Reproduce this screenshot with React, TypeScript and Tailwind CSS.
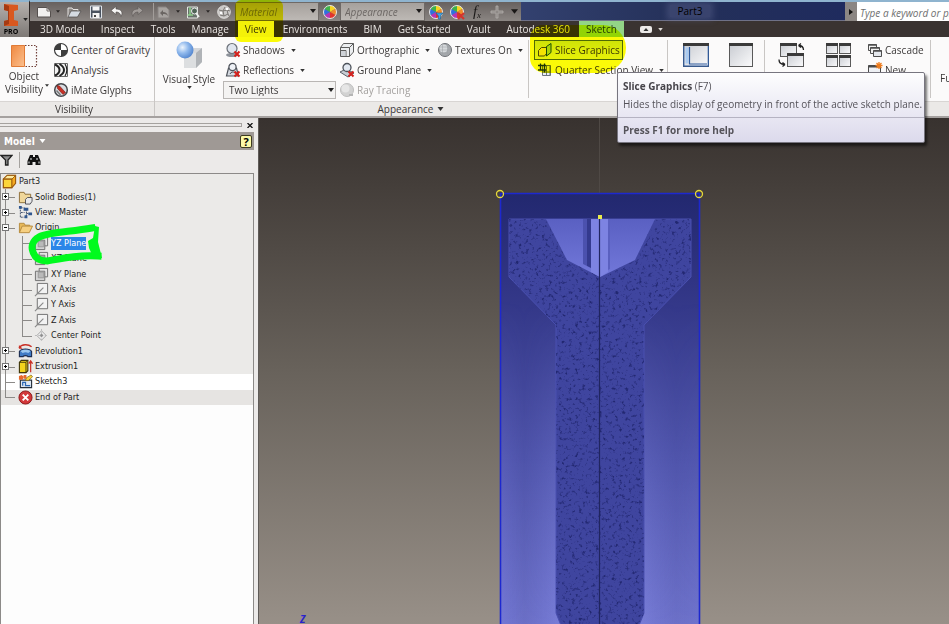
import type { ReactNode } from "react";

type IconProps = { children: ReactNode; className?: string; box?: string };

function Icon({ children, className = "h-4 w-4", box = "0 0 16 16" }: IconProps) {
  return (
    <svg viewBox={box} className={`shrink-0 ${className}`} fill="none" aria-hidden="true">
      {children}
    </svg>
  );
}

function Caret({ className = "h-[3px] w-[5px] text-[#333]" }: { className?: string }) {
  return (
    <svg viewBox="0 0 6 4" className={`shrink-0 ${className}`} aria-hidden="true">
      <path d="M0 0h6L3 4z" fill="currentColor" />
    </svg>
  );
}

function Divider() {
  return <div className="my-[3px] w-px shrink-0 bg-[#c9c6c4]" />;
}

/* ---------- quick access icons ---------- */

const newIcon = (
  <Icon>
    <path d="M1.500 3.500h9.500l3.500 3.500v6h-13z" fill="#f1f0ef" stroke="#55504e" />
    <path d="M11 3.500V7h3.500" stroke="#77716e" />
  </Icon>
);

const openIcon = (
  <Icon>
    <path d="M2 13V4h4l1 1.500h5V7" fill="#8d8986" stroke="#e7e5e3" />
    <path d="M2 13l3-6h10l-3.500 6z" fill="#d5dbe2" stroke="#4c4846" strokeWidth=".7" />
  </Icon>
);

const saveIcon = (
  <Icon>
    <path d="M2.500 2h11v12h-11z" fill="#4a5360" stroke="#dfe4ea" />
    <path d="M4.500 2.500h7v4h-7zM4.500 9h7v5h-7z" fill="#f5f5f5" />
    <path d="M6 11h2v2H6z" fill="#444" />
  </Icon>
);

const undoIcon = (
  <Icon>
    <path d="M7 2.500L2 6.500l5 4V8c3 0 4.500 1.500 5 4.500C14.500 8 12 5 7 5z" fill="#f6f5f4" stroke="#4b4644" strokeWidth=".6" />
  </Icon>
);

const redoIcon = (
  <Icon>
    <path d="M9 2.500l5 4-5 4V8c-3 0-4.500 1.500-5 4.500C1.500 8 4 5 9 5z" fill="#a09b98" stroke="#5d5855" strokeWidth=".6" />
  </Icon>
);

const returnIcon = (
  <Icon>
    <path d="M2 3h8l3 3v8H2z" fill="#a7a3a0" stroke="#8a8583" />
    <path d="M4 9l3-3v2c3 0 4 1 5 4-2-2-3-2-5-2v2z" fill="#6a6562" />
  </Icon>
);

const updateIcon = (
  <Icon>
    <path d="M2.500 3h10v11h-10z" fill="#68716b" stroke="#e3e6e2" />
    <path d="M5 3v8M2.500 11H8" stroke="#8fd08c" strokeWidth="1.500" />
    <circle cx="9.500" cy="7" r="3" fill="#506457" stroke="#eef0ee" />
    <path d="M11 9l3 4" stroke="#eef0ee" strokeWidth="1.800" />
  </Icon>
);

const gearIcon = (
  <Icon>
    <circle cx="8" cy="8" r="6.300" fill="#c9c7c5" stroke="#dedcda" />
    <path d="M3 6l4 1 2-4M7 7l1 5 4-2-1-4-4 1M8 12l-4-1M11 6l3 1M12 10l1 2" stroke="#7a7673" />
    <circle cx="11" cy="5" r="1.200" fill="#fff" />
    <circle cx="5" cy="9" r="1.200" fill="#fff" />
  </Icon>
);

function Wheel({ badge }: { badge?: ReactNode }) {
  return (
    <Icon>
      <path d="M8 8V1.500A6.500 6.500 0 0 1 13.600 4.700z" fill="#f6d422" />
      <path d="M8 8l5.600-3.300a6.500 6.500 0 0 1 0 6.500z" fill="#f08b2a" />
      <path d="M8 8l5.600 3.200A6.500 6.500 0 0 1 8 14.500z" fill="#e2342b" />
      <path d="M8 8v6.500a6.500 6.500 0 0 1-5.600-3.300z" fill="#b534b5" />
      <path d="M8 8l-5.600 3.200a6.500 6.500 0 0 1 0-6.500z" fill="#2f6fe0" />
      <path d="M8 8L2.400 4.700A6.500 6.500 0 0 1 8 1.500z" fill="#3fb24a" />
      <circle cx="8" cy="8" r="6.500" stroke="#e9e7e5" />
      {badge}
    </Icon>
  );
}

/* ---------- ribbon icons ---------- */

const gravityIcon = (
  <Icon>
    <circle cx="8" cy="8" r="6.500" fill="#fff" stroke="#3d3d3d" strokeWidth="1.200" />
    <path d="M8 8V1.500A6.500 6.500 0 0 0 1.500 8zM8 8v6.500A6.500 6.500 0 0 0 14.500 8z" fill="#3d3d3d" />
  </Icon>
);

const analysisIcon = (
  <Icon>
    <path d="M1.500 1.500h13v13h-13z" fill="#f3f3f3" stroke="#6a6a6a" />
    <path d="M2 2.500c3.500 1.500 4.500 3.500 4.500 5.500S5.500 12 2 13.500M6.500 2c3.500 2 4.500 4 4.500 6s-1 4-4.500 6" stroke="#222" strokeWidth="2" />
    <path d="M12 2c2.500 4 2.500 8 0 12" stroke="#222" strokeWidth="1.200" />
  </Icon>
);

const imateIcon = (
  <Icon>
    <circle cx="8" cy="8" r="6.300" fill="#d9dde2" stroke="#44474b" strokeWidth="1.500" />
    <path d="M4 3.500l2.500.5L12.500 10.500l-2.500 2-5.500-6z" fill="#c62f25" stroke="#6e1813" strokeWidth=".6" />
    <path d="M3.500 8.500l4 4.500" stroke="#777" strokeWidth="1.500" />
  </Icon>
);

const redX = <path d="M9.500 9.500l5 5M14.500 9.500l-5 5" stroke="#d4201c" strokeWidth="2" />;

const shadowsIcon = (
  <Icon>
    <ellipse cx="7" cy="13" rx="6" ry="2" fill="#8d929a" />
    <circle cx="7" cy="6.500" r="5" fill="#dfe5ee" stroke="#6b7078" strokeWidth="1.200" />
    {redX}
  </Icon>
);

const reflectionsIcon = (
  <Icon>
    <path d="M1.500 14l2-8h8l2 8z" fill="#d6dbe2" stroke="#4d525a" strokeWidth="1.200" />
    <circle cx="7.500" cy="5" r="3.600" fill="#eef1f6" stroke="#4d525a" strokeWidth="1.200" />
    <path d="M5 12a3 3 0 0 1 5-1" stroke="#4d525a" />
    {redX}
  </Icon>
);

const orthoIcon = (
  <Icon>
    <path d="M1.500 5.500l3-4h10v8.500l-4 4.500h-9z" fill="#eceef0" stroke="#5d5d5d" />
    <path d="M1.500 5.500h9v9M10.500 5.500l4-4" stroke="#5d5d5d" />
    <path d="M1.500 8.500H7v6" stroke="#5d5d5d" />
    <path d="M2 9h4.500v5H2z" fill="#cfd3d8" />
  </Icon>
);

const groundIcon = (
  <Icon>
    <path d="M1 10l6-3 8 4-6 4z" fill="#c7ccd3" stroke="#5a5f66" />
    <circle cx="8" cy="5.500" r="4" fill="#e2e8f1" stroke="#4d525a" strokeWidth="1.300" />
    {redX}
  </Icon>
);

function Ball({ muted }: { muted?: boolean }) {
  return (
    <Icon>
      <circle cx="8" cy="8" r="6.500" fill={muted ? "#d2d2d2" : "#a6a9ad"} stroke={muted ? "#bdbdbd" : "#6d7075"} />
      <circle cx="6.500" cy="6.500" r="4" fill={muted ? "#e6e6e6" : "#d6d9dc"} />
      {muted ? (
        <path d="M10 13h4" stroke="#b5b5b5" strokeWidth="2" />
      ) : (
        <path d="M3 5h10M2 8h12M3 11h10M5.500 2.500v11M10.500 2.500v11" stroke="#9b9ea2" strokeWidth=".5" />
      )}
    </Icon>
  );
}

const sliceIcon = (
  <Icon>
    <path d="M1.500 8.500l3-3h5v6l-2 2.500h-6z" fill="#f4e34a" stroke="#4f4d12" />
    <path d="M9.500 4.500l4.500-3v9l-4.500 3.500z" fill="#a9d6f0" stroke="#1d4f7a" />
  </Icon>
);

const quarterIcon = (
  <Icon>
    <path d="M5.500 3.500h8v10h-8z" fill="#e9edf3" stroke="#6b7480" />
    <path d="M5.500 10h8M9.500 3.500v10M13 3.500v10" stroke="#6b7480" />
    <path d="M1 3.500h8M3.500 1.500v7M1 8h8M7.500 1.500v9" stroke="#1d35d8" strokeWidth="1.300" />
  </Icon>
);

const cascadeIcon = (
  <Icon>
    <path d="M1.500 2.500h8v6h-8z" fill="#f1f1f1" stroke="#4e4e4e" />
    <path d="M3.500 5.500h9v6h-9z" fill="#f1f1f1" stroke="#4e4e4e" />
    <path d="M6.500 8.500h8v6h-8z" fill="#e4e7ec" stroke="#4e4e4e" />
    <path d="M1.500 3h8M3.500 6h9M6.500 9h8" stroke="#4e4e4e" strokeWidth="1.600" />
  </Icon>
);

const newWindowIcon = (
  <Icon>
    <path d="M1.500 3.500h12v11h-12z" fill="#eef0f4" stroke="#4b4b4b" />
    <path d="M1.500 4.500h12" stroke="#4b4b4b" strokeWidth="2" />
    <path d="M12 0v7M8.500 3.500h7M9.500 1l5 5M14.500 1l-5 5" stroke="#ee7b1c" strokeWidth="1.300" />
  </Icon>
);

function WindowShape({ x, y, w, h }: { x: number; y: number; w: number; h: number }) {
  return (
    <g>
      <rect x={x + 0.5} y={y + 0.5} width={w - 1} height={h - 1} fill="url(#pane)" stroke="#5a5a5a" />
      <rect x={x} y={y} width={w} height="3" fill="#3a3a3a" />
    </g>
  );
}

const paneGradient = (
  <defs>
    <linearGradient id="pane" x1="0" y1="0" x2="1" y2="1">
      <stop offset="0" stopColor="#c8cbd1" />
      <stop offset="1" stopColor="#fbfbfc" />
    </linearGradient>
  </defs>
);

const tabs = [
  "3D Model",
  "Inspect",
  "Tools",
  "Manage",
  "View",
  "Environments",
  "BIM",
  "Get Started",
  "Vault",
  "Autodesk 360",
  "Sketch",
];

const tabStyle: Record<string, string> = {
  View: "bg-[#f4f1ee] text-[#3b3634]",
  Sketch: "bg-[#93d487] text-[#22381f]",
};

function QatButton({ label, className, children }: { label: string; className: string; children: ReactNode }) {
  return (
    <button aria-label={label} className={`flex h-full shrink-0 items-center justify-center ${className}`}>
      {children}
    </button>
  );
}

function QatSelect({ label, className }: { label: string; className: string }) {
  return (
    <div className={`relative h-full shrink-0 ${className}`}>
      <select
        aria-label={label}
        className="block h-full w-full appearance-none border border-[#6f6a67] bg-linear-to-b from-[#a5a09c] to-[#bdb9b5] pl-1 text-[10px] leading-4 text-[#6d6865] italic"
      >
        <option>{label}</option>
      </select>
      <Caret className="pointer-events-none absolute top-[7px] right-[3px] h-1 w-[6px] text-[#1c1a19]" />
    </div>
  );
}

function TitleBar() {
  return (
    <div className="flex h-[21px] items-stretch border-t-2 border-[#8fb4cf] bg-linear-to-b from-[#67615f] to-[#8b8683] pl-[5px]">
      <QatButton label="New" className="w-[18px]">{newIcon}</QatButton>
      <QatButton label="New options" className="w-[10px]"><Caret className="h-[3px] w-1 text-[#2b2827]" /></QatButton>
      <QatButton label="Open" className="w-[22px]">{openIcon}</QatButton>
      <QatButton label="Save" className="w-[22px]">{saveIcon}</QatButton>
      <QatButton label="Undo" className="w-5">{undoIcon}</QatButton>
      <QatButton label="Redo" className="w-5">{redoIcon}</QatButton>
      <div className="my-px mr-px ml-[6px] w-px shrink-0 bg-[#a29d9a]" />
      <QatButton label="Return" className="w-[18px]">{returnIcon}</QatButton>
      <QatButton label="Return options" className="w-[10px]"><Caret className="h-[3px] w-1 text-[#2b2827]" /></QatButton>
      <QatButton label="Update" className="w-5">{updateIcon}</QatButton>
      <QatButton label="Update options" className="w-[10px]"><Caret className="h-[3px] w-1 text-[#2b2827]" /></QatButton>
      <QatButton label="Materials" className="w-[22px]">{gearIcon}</QatButton>
      <QatSelect label="Material" className="w-[84px]" />
      <QatButton label="Appearances" className="w-[21px]"><Wheel /></QatButton>
      <QatSelect label="Appearance" className="w-[85px]" />
      <QatButton label="Adjust" className="w-[21px]">
        <Wheel badge={<path d="M8 9h7l-2.500 3v3h-2v-3z" fill="#3fa5e6" stroke="#1d5f91" strokeWidth=".6" />} />
      </QatButton>
      <QatButton label="Clear" className="w-[21px]">
        <Wheel badge={<path d="M9 9l6 6M15 9l-6 6" stroke="#d3342c" strokeWidth="2.200" />} />
      </QatButton>
      <QatButton label="Parameters" className="w-5">
        <span className="font-['Liberation_Serif',serif] text-[15px] leading-none text-[#1b1918] italic">
          f<sub className="text-[9px]">x</sub>
        </span>
      </QatButton>
      <QatButton label="Add" className="w-5">
        <Icon>
          <path d="M7 2h2v5h5v2H9v5H7V9H2V7h5z" fill="#8e8986" stroke="#b3aeab" strokeWidth=".8" />
        </Icon>
      </QatButton>
      <QatButton label="Customize" className="w-[14px]"><Caret className="h-[5px] w-[7px] text-[#191716]" /></QatButton>
      <div className="flex min-w-0 flex-1 items-center justify-center border-b border-[#6f7187] bg-linear-to-r from-[#33416f] via-[#243059] to-[#1f2b5e] pl-[14px]">
        <span className="bg-[#5a628b]/40 px-2 text-[10px] leading-3 text-black shadow-[0_0_6px_3px_rgba(100,108,150,0.4)]">Part3</span>
      </div>
      <button aria-label="Collapse search" className="flex w-3 shrink-0 items-center justify-center bg-[#8b8683]">
        <svg viewBox="0 0 4 6" className="h-[6px] w-1"><path d="M0 0l4 3-4 3z" fill="#111" /></svg>
      </button>
      <input
        aria-label="Search"
        placeholder="Type a keyword or phrase"
        className="w-[92px] shrink-0 bg-white pt-1 pl-[3px] text-[10px] italic placeholder:text-[#6f6f6f]"
      />
    </div>
  );
}

function TabBar() {
  return (
    <nav className="flex h-4 items-stretch gap-[2px] bg-[#3a3331] pl-[3px] text-[10px] text-[#e8e4e1]">
      {tabs.map((tab) => (
        <button key={tab} className={`shrink-0 px-[7px] leading-4 ${tabStyle[tab] ?? ""}`}>
          {tab}
        </button>
      ))}
      <button aria-label="Minimize ribbon" className="ml-[14px] flex items-center gap-[6px]">
        <Icon className="h-[7px] w-3" box="0 0 12 7">
          <rect width="12" height="7" rx="2" fill="#eceae8" />
          <path d="M3.500 5h5L6 2z" fill="#333" />
        </Icon>
        <Caret className="h-[3px] w-[5px] text-[#dedad7]" />
      </button>
    </nav>
  );
}

type CommandProps = { icon: ReactNode; label: string; menu?: boolean; muted?: boolean; className?: string };

function Command({ icon, label, menu, muted, className = "" }: CommandProps) {
  return (
    <button
      className={`flex h-5 items-center gap-[2px] whitespace-nowrap ${muted ? "text-[#a3a09e]" : "text-[#3b3838]"} ${className}`}
    >
      {icon}
      {label}
      {menu && <Caret className="ml-1 h-[3px] w-[5px] text-[#333]" />}
    </button>
  );
}

function Tooltip() {
  return (
    <div
      role="tooltip"
      className="absolute top-[35px] left-[88px] z-20 w-[308px] rounded-xs border border-[#77757f] bg-linear-to-b from-[#fdfdfe] to-[#dcdaec] text-[10px] whitespace-nowrap text-[#55535a] shadow-[2px_3px_3px_rgba(0,0,0,0.55)]"
    >
      <div className="px-[5px] pt-1 pb-1 leading-[18px]">
        <p><b className="text-[#454349]">Slice Graphics</b> (F7)</p>
        <p>Hides the display of geometry in front of the active sketch plane.</p>
      </div>
      <p className="border-t border-[#b5b3c2] px-[5px] leading-6 font-bold">Press F1 for more help</p>
    </div>
  );
}

function Ribbon() {
  return (
    <div className="flex h-[81px] border-b-2 border-[#a5a19f] bg-[#fbfafa] text-[10px] leading-3 text-[#3b3838]">
      <section className="flex w-[155px] shrink-0 flex-col border-r border-[#c9c6c4]">
        <div className="flex flex-1 pt-[3px]">
          <button className="relative flex w-12 flex-col items-center pt-1 leading-[13px]">
            <Icon className="mb-[2px] h-6 w-7" box="0 0 28 24">
              <defs>
                <linearGradient id="orange" x1="0" y1="0" x2="1" y2="1">
                  <stop offset="0" stopColor="#f0883f" />
                  <stop offset="1" stopColor="#fbc08f" />
                </linearGradient>
              </defs>
              <path d="M1.500 1.500h13v21h-13z" fill="url(#orange)" stroke="#e07b37" />
              <path d="M15 1.500h11.500v21H15" stroke="#71413a" strokeWidth="1.200" strokeDasharray="1.500 1.500" />
            </Icon>
            <span>Object</span>
            <span>Visibility</span>
            <Caret className="absolute top-11 -right-px h-[3px] w-1 text-[#333]" />
          </button>
          <div className="ml-[5px]">
            <Command icon={gravityIcon} label="Center of Gravity" />
            <Command icon={analysisIcon} label="Analysis" />
            <Command icon={imateIcon} label="iMate Glyphs" />
          </div>
        </div>
        <h2 className="h-[15px] border-t border-[#d8d5d3] bg-[#ebe9e7] pr-[6px] text-center leading-[14px]">Visibility</h2>
      </section>

      <section className="flex w-[512px] shrink-0 flex-col">
        <div className="flex flex-1">
          <button className="flex w-[68px] shrink-0 flex-col items-center pt-1">
            <Icon className="mb-1 h-7 w-7" box="0 0 28 28">
              <defs>
                <radialGradient id="bluebell" cx=".35" cy=".35" r=".7">
                  <stop offset="0" stopColor="#eef5fd" />
                  <stop offset=".5" stopColor="#8fb8ec" />
                  <stop offset="1" stopColor="#5285cf" />
                </radialGradient>
              </defs>
              <path d="M9 12l6-5h12v14l-6 6H9z" fill="#d5d7da" />
              <path d="M9 12h12v15H9z" fill="#dcdee0" />
              <path d="M21 12l6-5v14l-6 6z" fill="#b0b3b7" />
              <circle cx="10" cy="9" r="8.500" fill="url(#bluebell)" />
            </Icon>
            <span>Visual Style</span>
            <Caret className="mt-[1px] h-[3px] w-[5px] text-[#333]" />
          </button>
          <div className="w-[116px] shrink-0 pt-[3px]">
            <Command icon={shadowsIcon} label="Shadows" menu className="pl-[2px]" />
            <Command icon={reflectionsIcon} label="Reflections" menu className="pl-[2px]" />
            <div className="relative">
              <select
                aria-label="Lighting style"
                className="mt-px h-[18px] w-[113px] appearance-none border border-[#b9b6b4] bg-[#f4f3f2] pl-[5px] text-[10px]"
              >
                <option>Two Lights</option>
              </select>
              <Caret className="pointer-events-none absolute top-2 right-[5px] h-1 w-[6px] text-[#222]" />
            </div>
          </div>
          <div className="w-[98px] shrink-0 pt-[3px]">
            <Command icon={orthoIcon} label="Orthographic" menu />
            <Command icon={groundIcon} label="Ground Plane" menu />
            <Command icon={<Ball muted />} label="Ray Tracing" muted />
          </div>
          <div className="w-[91px] shrink-0 pt-[3px]">
            <Command icon={<Ball />} label="Textures On" menu />
          </div>
          <Divider />
          <div className="relative flex-1 pt-[3px] pl-[5px]">
            <div className="pointer-events-none absolute -top-3 left-px z-10 h-12 w-24 rounded-[20px_36px_40px_24px] bg-[#ffff08] mix-blend-multiply" />
            <Command
              icon={sliceIcon}
              label="Slice Graphics"
              className="w-[89px] border border-[#4f6a4a] bg-linear-to-b from-[#cfe3fa] to-[#e7f1fd] pl-[2px]"
            />
            <Command icon={quarterIcon} label="Quarter Section View" menu className="pl-[3px]" />
            <Tooltip />
          </div>
        </div>
        <h2 className="flex h-[15px] items-center justify-center gap-1 border-t border-[#d8d5d3] bg-[#ebe9e7]">
          Appearance <Caret className="h-1 w-[7px] text-[#333]" />
        </h2>
      </section>

      <section className="flex min-w-0 flex-1 flex-col">
        <div className="flex flex-1 overflow-hidden">
          <Divider />
          <div className="flex w-24 shrink-0 items-start gap-[18px] pt-[5px] pl-[14px]">
            <button aria-label="User Interface">
              <Icon className="h-[26px] w-7" box="0 0 28 26">
                {paneGradient}
                <WindowShape x={1} y={1} w={26} h={24} />
                <path d="M3.500 5.500h3v16h-3z" fill="#a9cbf2" />
                <path d="M1.800 4v20.200h24.500V4M7.500 5v17H25" stroke="#2e5a9d" strokeWidth="1.200" />
              </Icon>
            </button>
            <button aria-label="Clean Screen">
              <Icon className="h-[26px] w-[26px]" box="0 0 26 26">
                <WindowShape x={1} y={1} w={24} h={24} />
              </Icon>
            </button>
          </div>
          <Divider />
          <div className="flex w-[102px] shrink-0 items-start gap-5 pt-[5px] pl-[13px]">
            <button aria-label="Switch">
              <Icon className="h-[26px] w-7" box="0 0 28 26">
                <WindowShape x={2} y={1} w={17} h={14} />
                <WindowShape x={9} y={11} w={17} h={14} />
                <path d="M20.500 3.500c4 0 5 1.500 5 4.500M20.500 3.500l2.500-2M20.500 3.500l2.500 2M7 22.500c-5 0-6-2-6-5M7 22.500l-2.500 2M7 22.500l-2.500-2" stroke="#222" strokeWidth="1.300" />
              </Icon>
            </button>
            <button aria-label="Tile">
              <Icon className="h-[26px] w-[26px]" box="0 0 26 26">
                <WindowShape x={0} y={1} w={12} h={11} />
                <WindowShape x={13} y={1} w={12} h={11} />
                <WindowShape x={0} y={13} w={12} h={12} />
                <WindowShape x={13} y={13} w={12} h={12} />
              </Icon>
            </button>
          </div>
          <div className="w-[63px] shrink-0 pt-[3px] pr-px">
            <Command icon={cascadeIcon} label="Cascade" />
            <Command icon={newWindowIcon} label="New" />
          </div>
          <Divider />
          <button className="self-start pt-[35px] pl-[9px]">Full</button>
        </div>
        <div className="h-[15px] border-t border-[#d8d5d3] bg-[#ebe9e7]" />
      </section>
    </div>
  );
}

/* ---------- model browser ---------- */

const partIcon = (
  <Icon className="h-[15px] w-[15px]">
    <path d="M1.500 5.500l4-4h9v8.500l-4 4.500h-9z" fill="#f5a921" stroke="#9a5a0c" strokeWidth="1.200" />
    <path d="M1.500 5.500l4-4h9l-4 4z" fill="#fdeaa0" stroke="#9a5a0c" />
    <path d="M1.500 5.500h9v9h-9z" fill="#fcd53a" stroke="#9a5a0c" strokeWidth="1.200" />
  </Icon>
);

const bodiesIcon = (
  <Icon className="h-[15px] w-[15px]">
    <path d="M1.500 13.500v-11h5l1 2h6v9z" fill="#f0d79b" stroke="#8c6d36" />
    <path d="M8 10l2-2h5v4l-2 3H8z" fill="#e8e8ea" stroke="#4e4e55" />
  </Icon>
);

const viewIcon = (
  <Icon className="h-[15px] w-[15px]">
    <path d="M2.500 2v11M3 3h4M3 8h4M3 13h4M9 4v9M9 9h6" stroke="#3a4a66" strokeDasharray="2 1" />
    <path d="M1 1h3v3H1zM6 3h5v3H6zM7 11h3v3H7zM11 8h4v3h-4z" fill="#2f568f" />
  </Icon>
);

const folderIcon = (
  <Icon className="h-[15px] w-[15px]">
    <path d="M1.500 13.500v-10h5l1 2h5v3" fill="#e7b95a" stroke="#b58a3c" />
    <path d="M1.500 13.500l3-7h11l-3.500 7z" fill="#f6cf80" stroke="#b58a3c" />
  </Icon>
);

const planeIcon = (
  <Icon className="h-[15px] w-[15px]">
    <path d="M5.500 1.500h9v9h-9z" fill="#e6e6e6" stroke="#6e6e6e" />
    <path d="M1.500 4.500h10v10h-10z" fill="#d4d4d4" stroke="#6e6e6e" />
    <path d="M4.500 5.500h6v6h-6z" fill="#b9b9b9" stroke="#999" />
  </Icon>
);

const axisIcon = (
  <Icon className="h-[15px] w-[15px]">
    <path d="M3.500 1.500h11v11h-11z" fill="#f2f2f2" stroke="#6e6e6e" />
    <path d="M1 15l9-9" stroke="#888" strokeWidth="1.200" />
  </Icon>
);

const pointIcon = (
  <Icon className="h-[15px] w-[15px]">
    <path d="M8 3l5 5-5 5-5-5z" fill="#ececec" stroke="#a5a5a5" />
    <path d="M8 1v14M1 8h14" stroke="#b9b9b9" strokeDasharray="2 1.500" />
    <circle cx="8" cy="8" r="1.500" fill="#8f8f8f" />
  </Icon>
);

const revolutionIcon = (
  <Icon className="h-[15px] w-[15px]">
    <path d="M1 4C4 0 11 0 14.500 3" stroke="#c93026" strokeWidth="1.500" />
    <path d="M1 1v4h4z" fill="#c93026" />
    <path d="M1.500 8c2-3.500 11-3.500 13 0v5.500h-4c-.5-1.500-4.500-1.500-5 0h-4z" fill="#3f7ac4" stroke="#1d2e52" strokeWidth="1.200" />
    <path d="M2.500 7.500c3-2 8-2 11 0L11 9.500c-2-1-4-1-6 0z" fill="#9cc7ee" />
  </Icon>
);

const extrusionIcon = (
  <Icon className="h-[15px] w-[15px]">
    <path d="M1.500 3.500l2-2h7v11l-2 2h-7z" fill="#f2d41d" stroke="#3f370a" strokeWidth="1.200" />
    <path d="M8.500 3.500v11M1.500 3.500h7l2-2" stroke="#3f370a" />
    <path d="M13.500 14V3M11.500 5l2-3 2 3" stroke="#c93026" strokeWidth="1.300" />
  </Icon>
);

const sketchIcon = (
  <Icon className="h-[15px] w-[15px]">
    <path d="M2.500 6.500h12v8h-12z" fill="#dfe8f2" stroke="#27303c" strokeWidth="1.200" />
    <path d="M5 12.500V9h3v3.500h5" stroke="#2a67b5" strokeWidth="1.300" />
    <path d="M1 2l3-1 2 2-1 3H1zM6 1h3v4H6z" fill="#e8682b" />
    <path d="M8 7l1-3 5-3 1.500 2L11 7z" fill="#f6d33a" stroke="#7a5b0f" strokeWidth=".7" />
  </Icon>
);

const endIcon = (
  <Icon className="h-[15px] w-[15px]">
    <circle cx="8" cy="8" r="7" fill="#d2383a" stroke="#8b1719" />
    <path d="M5 5l6 6M11 5l-6 6" stroke="#fff" strokeWidth="2" />
  </Icon>
);

type TreeNode = { label: string; depth: 0 | 1 | 2; icon: ReactNode; toggle?: "+" | "-"; last?: boolean; row?: string };

const nodes: TreeNode[] = [
  { label: "Part3", depth: 0, icon: partIcon },
  { label: "Solid Bodies(1)", depth: 1, icon: bodiesIcon, toggle: "+" },
  { label: "View: Master", depth: 1, icon: viewIcon, toggle: "+" },
  { label: "Origin", depth: 1, icon: folderIcon, toggle: "-" },
  { label: "YZ Plane", depth: 2, icon: planeIcon },
  { label: "XZ Plane", depth: 2, icon: planeIcon },
  { label: "XY Plane", depth: 2, icon: planeIcon },
  { label: "X Axis", depth: 2, icon: axisIcon },
  { label: "Y Axis", depth: 2, icon: axisIcon },
  { label: "Z Axis", depth: 2, icon: axisIcon },
  { label: "Center Point", depth: 2, icon: pointIcon, last: true },
  { label: "Revolution1", depth: 1, icon: revolutionIcon, toggle: "+" },
  { label: "Extrusion1", depth: 1, icon: extrusionIcon, toggle: "+" },
  { label: "Sketch3", depth: 1, icon: sketchIcon, row: "bg-white" },
  { label: "End of Part", depth: 1, icon: endIcon, last: true, row: "bg-[#e6e4e2]" },
];

const indent = ["pl-px", "pl-[17px]", "pl-[33px]"];

function Branch({ node }: { node: TreeNode }) {
  if (node.depth === 0) return null;
  const inner = node.depth === 2;
  return (
    <>
      <span className={`absolute top-0 left-1 w-px bg-[#8c8a88] ${node.last && !inner ? "h-1/2" : "h-full"}`} />
      {inner && <span className={`absolute top-0 left-[21px] w-px bg-[#8c8a88] ${node.last ? "h-1/2" : "h-full"}`} />}
      <span className={`absolute top-1/2 h-px w-[10px] bg-[#8c8a88] ${inner ? "left-[21px]" : "left-1"}`} />
      {node.toggle && (
        <button aria-label={`Toggle ${node.label}`} className="absolute top-1 left-px h-[7px] w-[7px] border border-[#777] bg-white">
          <span className="absolute top-[2px] left-px h-px w-[3px] bg-black" />
          {node.toggle === "+" && <span className="absolute top-px left-[2px] h-[3px] w-px bg-black" />}
        </button>
      )}
    </>
  );
}

function ModelBrowser() {
  return (
    <aside className="flex w-[259px] shrink-0 flex-col border-r border-[#5f5b58] bg-[#eceae9] pr-1">
      <div className="flex h-[14px] items-center gap-[5px] pr-px">
        <div className="h-1 flex-1 border-y border-r border-[#a5a29f]" />
        <button aria-label="Close browser">
          <svg viewBox="0 0 6 6" className="h-[5px] w-[6px]"><path d="M0 0l6 6M6 0L0 6" stroke="#111" strokeWidth="1.500" /></svg>
        </button>
      </div>
      <div className="flex h-[18px] items-center justify-between bg-[#9f9995] pr-[2px] pl-1">
        <button className="flex items-center gap-1 font-['DejaVu_Sans_Condensed','Open_Sans',sans-serif] text-[10px] font-bold text-white">
          Model <Caret className="h-1 w-[7px] text-white" />
        </button>
        <button aria-label="Help" className="h-[13px] w-3 rounded-xs border border-[#3d3a20] bg-[#fcf9a8] text-[11px] leading-[11px] font-bold text-black">
          ?
        </button>
      </div>
      <div className="flex h-[23px] items-center gap-3 pb-[3px]">
        <button aria-label="Filter">
          <Icon className="h-3 w-[13px]" box="0 0 13 12">
            <path d="M1 1.500h11L8 6v5H5.500V6z" fill="#8d8d8d" stroke="#222" strokeWidth="1.300" />
          </Icon>
        </button>
        <div className="-ml-[6px] h-4 w-px bg-[#a5a29f]" />
        <button aria-label="Find" className="-ml-[5px]">
          <Icon className="h-3 w-[14px]" box="0 0 14 12">
            <path d="M3 1h3v2h2V1h3l2.500 6v4H8.500V8h-3v3H.5V7z" fill="#111" />
            <path d="M2 7.500v2M4 4v2M10 4v2M12 7.500v2" stroke="#eee" />
          </Icon>
        </button>
      </div>
      <div className="relative flex-1 border-t border-r border-l border-[#8c8a88] bg-[#fdfdfd]">
        <ul className="flex h-[231px] flex-col bg-[#ebeae8] font-['DejaVu_Sans_Condensed','Open_Sans',sans-serif] text-[9px] text-[#222]">
          {nodes.map((node) => (
            <li key={node.label} className={`relative flex flex-1 items-center gap-[2px] ${indent[node.depth]} ${node.row ?? ""}`}>
              <Branch node={node} />
              {node.icon}
              <span className={`leading-[13px] ${node.label === "YZ Plane" ? "bg-[#2a86e8] text-white" : ""}`}>{node.label}</span>
            </li>
          ))}
        </ul>
        {/* marker ring round the selected plane */}
        <svg viewBox="0 0 76 44" className="pointer-events-none absolute top-[49px] left-[27px] h-11 w-[76px]" fill="none" aria-hidden="true">
          <path d="M64 5C42 9 22 9 11 14 4 18 3 24 5 29 7 35 12 38 19 38 36 35 50 32 70 33" stroke="#00fa1e" strokeWidth="7" strokeLinecap="square" />
          <path d="M67 3l4 1-1 15 4 16-8 1-5-11-1-7 5-3z" fill="#00fa1e" />
        </svg>
      </div>
    </aside>
  );
}

const bolt = "M250 101H432V159L385 207V495L375 520H307L297 495V207L250 159Z";

function Viewport() {
  return (
    <main className="min-w-0 flex-1 overflow-hidden bg-linear-to-b from-[#38322f] via-[#68625b] to-[#989088]">
      <svg viewBox="0 0 690 506" preserveAspectRatio="xMidYMin slice" className="h-full w-full" role="img" aria-label="Sliced bolt">
        <defs>
          <linearGradient id="plane" x1="0" y1="0" x2="0" y2="1">
            <stop offset="0" stopColor="#22286f" />
            <stop offset=".2" stopColor="#303484" />
            <stop offset=".6" stopColor="#4d52a8" />
            <stop offset="1" stopColor="#6c70c6" />
          </linearGradient>
          <linearGradient id="glow" x1="0" y1="0" x2="1" y2="0">
            <stop offset="0" stopColor="#8388f0" stopOpacity=".4" />
            <stop offset=".12" stopColor="#7a80e8" stopOpacity=".05" />
            <stop offset=".28" stopColor="#8a90f0" stopOpacity=".4" />
            <stop offset=".72" stopColor="#8a90f0" stopOpacity=".4" />
            <stop offset=".88" stopColor="#7a80e8" stopOpacity=".1" />
            <stop offset="1" stopColor="#8388f0" stopOpacity=".2" />
          </linearGradient>
          <linearGradient id="fade" x1="0" y1="0" x2="0" y2="1">
            <stop offset=".25" stopColor="#000" />
            <stop offset="1" stopColor="#fff" />
          </linearGradient>
          <linearGradient id="recess" x1="0" y1="0" x2="0" y2="1">
            <stop offset="0" stopColor="#5a60c2" />
            <stop offset="1" stopColor="#7278da" />
          </linearGradient>
          <mask id="lower"><rect x="241" y="75" width="200" height="431" fill="url(#fade)" /></mask>
          <filter id="speckle" x="0" y="0" width="1" height="1" colorInterpolationFilters="sRGB">
            <feTurbulence type="fractalNoise" baseFrequency=".3" numOctaves="3" seed="7" />
            <feColorMatrix values="0 0 0 0 .11  0 0 0 0 .13  0 0 0 0 .4  4 0 0 0 -2.250" />
          </filter>
          <clipPath id="section"><path d={bolt} /></clipPath>
        </defs>
        <path d="M340.500 0v75" stroke="#4f4945" />
        <rect x="241" y="75" width="200" height="440" fill="url(#plane)" />
        <rect x="241" y="75" width="200" height="440" fill="url(#glow)" mask="url(#lower)" />
        <path d={bolt} fill="#3f459f" stroke="#4a50b0" />
        <rect x="250" y="101" width="182" height="420" filter="url(#speckle)" clipPath="url(#section)" opacity=".8" />
        <path d="M287 101H396L376 142 341 159 308 142Z" fill="url(#recess)" />
        <path d="M324 101h4v47l-4-2z" fill="#4b51ae" />
        <path d="M328 101h4v49l-4-2z" fill="#343a8e" />
        <path d="M332 101h17v53l-8 5-9-5z" fill="#7d83e2" />
        <path d="M349 101h2v50l-2 1z" fill="#5a60c0" />
        <path d="M340.500 101v405" stroke="#20255f" strokeWidth="1.200" />
        <path d="M241.500 510V75.500H440.500V510" stroke="#1d28cf" strokeWidth="1.600" fill="none" />
        <circle cx="241" cy="76" r="3.500" fill="none" stroke="#e6d93a" strokeWidth="1.300" />
        <circle cx="440" cy="76" r="3.500" fill="none" stroke="#e6d93a" strokeWidth="1.300" />
        <rect x="339" y="97" width="4" height="4" fill="#e9ec4a" />
        <text x="41" y="505" fill="#2a22cc" className="font-['Open_Sans',sans-serif] text-[10px] font-bold italic">Z</text>
      </svg>
    </main>
  );
}

export default function App() {
  return (
    <div className="flex h-screen flex-col overflow-hidden font-['Open_Sans','Noto_Sans',sans-serif]">
      <header className="relative shrink-0">
        <div className="flex">
          <button
            aria-label="Application menu"
            className="flex w-[30px] shrink-0 items-center gap-[3px] border-t-2 border-r border-[#8fb4cf] border-r-[#2b2625] bg-linear-to-b from-[#b5b1ae] to-[#7e7976] pl-[2px]"
          >
            <span className="flex w-[18px] flex-col items-center">
              <Icon className="h-6 w-4" box="0 0 16 24">
                <path d="M1 1l14 1v5l-4 1v9l4 1v5H1v-5l4-1V8L1 7z" fill="#d9581f" />
                <path d="M1 1l5 2v18l-5 2v-5l4-1V8L1 7z" fill="#a53a12" />
              </Icon>
              <span className="text-[7px] leading-[9px] font-bold text-black">PRO</span>
            </span>
            <Caret className="h-[3px] w-[5px] text-[#222]" />
          </button>
          <div className="min-w-0 flex-1">
            <TitleBar />
            <TabBar />
          </div>
        </div>
        <Ribbon />
        <div className="pointer-events-none absolute top-0 left-[235px] h-[42px] w-12 rounded-md bg-[#ffff08] mix-blend-multiply" />
      </header>
      <div className="flex min-h-0 flex-1">
        <ModelBrowser />
        <Viewport />
      </div>
    </div>
  );
}
